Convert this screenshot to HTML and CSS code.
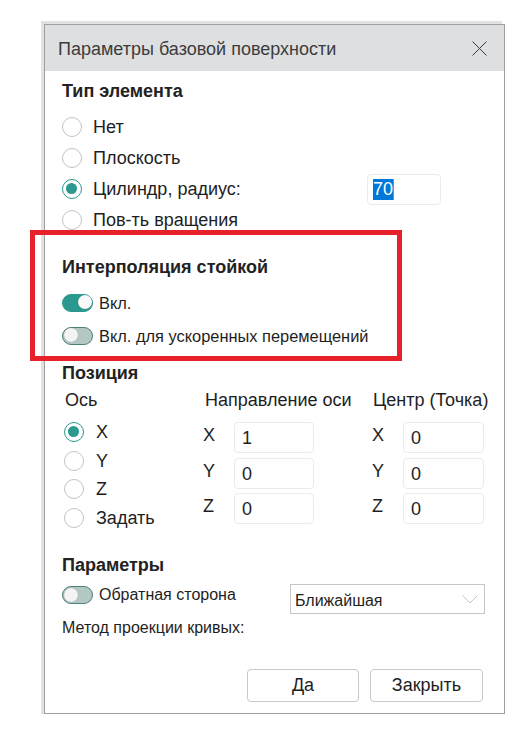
FILE: index.html
```html
<!DOCTYPE html>
<html lang="ru">
<head>
<meta charset="utf-8">
<title>Параметры базовой поверхности</title>
<link rel="stylesheet" href="styles.css">
</head>
<body>
<div class="dialog">
  <div class="titlebar">
    <span class="title">Параметры базовой поверхности</span>
    <svg class="close" width="15" height="15" viewBox="0 0 15 15"><path d="M0.5 0.5 L14.5 14.5 M14.5 0.5 L0.5 14.5" stroke="#3a3a3a" stroke-width="1" fill="none"/></svg>
  </div>
  <div class="content">
    <div class="section type">
      <div class="h">Тип элемента</div>
      <div class="radio-row"><span class="radio"></span><span class="lbl">Нет</span></div>
      <div class="radio-row"><span class="radio"></span><span class="lbl">Плоскость</span></div>
      <div class="radio-row"><span class="radio on"></span><span class="lbl cyl">Цилиндр, радиус:</span><span class="input radius"><span class="sel">70</span><span class="caret"></span></span></div>
      <div class="radio-row"><span class="radio"></span><span class="lbl">Пов-ть вращения</span></div>
    </div>
    <div class="section interp">
      <div class="redbox"></div>
      <div class="h">Интерполяция стойкой</div>
      <div class="toggle-row"><span class="toggle on"></span><span class="lbl small">Вкл.</span></div>
      <div class="toggle-row"><span class="toggle"></span><span class="lbl small">Вкл. для ускоренных перемещений</span></div>
    </div>
    <div class="section pos">
      <div class="h">Позиция</div>
      <div class="pos-grid">
        <div class="col axis">
          <div class="colhead">Ось</div>
          <div class="axis-rows">
            <div class="axis-row"><span class="radio on"></span><span class="lbl">X</span></div>
            <div class="axis-row"><span class="radio"></span><span class="lbl">Y</span></div>
            <div class="axis-row"><span class="radio"></span><span class="lbl">Z</span></div>
            <div class="axis-row"><span class="radio"></span><span class="lbl">Задать</span></div>
          </div>
        </div>
        <div class="col dir">
          <div class="colhead">Направление оси</div>
          <div class="fields">
            <div class="field-row"><span class="flbl">X</span><span class="input num">1</span></div>
            <div class="field-row"><span class="flbl">Y</span><span class="input num">0</span></div>
            <div class="field-row"><span class="flbl">Z</span><span class="input num">0</span></div>
          </div>
        </div>
        <div class="col center">
          <div class="colhead">Центр (Точка)</div>
          <div class="fields">
            <div class="field-row"><span class="flbl">X</span><span class="input num">0</span></div>
            <div class="field-row"><span class="flbl">Y</span><span class="input num">0</span></div>
            <div class="field-row"><span class="flbl">Z</span><span class="input num">0</span></div>
          </div>
        </div>
      </div>
    </div>
    <div class="section params">
      <div class="h">Параметры</div>
      <div class="param-row">
        <span class="toggle"></span><span class="lbl small back">Обратная сторона</span>
        <span class="select"><span class="seltext">Ближайшая</span>
          <svg class="chev" width="16" height="9" viewBox="0 0 16 9"><path d="M0.5 0.5 L8 8 L15.5 0.5" stroke="#c4c4c4" stroke-width="1" fill="none"/></svg>
        </span>
      </div>
      <div class="method">Метод проекции кривых:</div>
    </div>
    <div class="buttons">
      <button class="btn ok">Да</button>
      <button class="btn close-btn">Закрыть</button>
    </div>
  </div>
</div>
</body>
</html>
```
FILE: styles.css
```css
* { box-sizing: border-box; }
html, body { margin: 0; padding: 0; background: #ffffff; }
body {
  font-family: "Liberation Sans", Arial, sans-serif;
  font-size: 18px;
  color: #1e1e1e;
  padding: 24px 0 0 44px;
  height: 729px;
  overflow: hidden;
}
.dialog {
  width: 461px;
  height: 690px;
  border: 1px solid #9e9e9e;
  background: #ffffff;
  box-shadow: -3px -3px 0 0 #e2e2e2, -3px 0 0 0 #e2e2e2;
  display: flex;
  flex-direction: column;
}
.titlebar {
  height: 46px;
  background: #dedfe1;
  display: flex;
  align-items: center;
  padding: 0 17px 0 13px;
  justify-content: space-between;
  flex: none;
}
.title {
  font-size: 18px;
  color: #3c3c3c;
  line-height: 22px;
  margin-top: 2px;
}
.close { display: block; margin-top: 1px; }
.content {
  padding: 10px 0 0 17px;
  display: flex;
  flex-direction: column;
}
.h {
  font-weight: bold;
  font-size: 18px;
  height: 20px;
  line-height: 20px;
  color: #222;
}
.radio {
  width: 20px;
  height: 20px;
  border-radius: 50%;
  border: 1.5px solid #c3c3c3;
  background: #fff;
  display: inline-block;
  flex: none;
  position: relative;
}
.radio.on {
  border-color: #2c998e;
}
.radio.on::after {
  content: "";
  position: absolute;
  left: 3px; top: 3px;
  width: 11px; height: 11px;
  border-radius: 50%;
  background: #2c998e;
}
.type .h { margin-bottom: 10px; }
.radio-row {
  height: 31px;
  display: flex;
  align-items: center;
}
.radio-row .radio { margin-right: 11px; }
.lbl { white-space: nowrap; line-height: 22px; }
.small { font-size: 16.4px; }
.cyl { width: 274px; }
.input {
  display: inline-flex;
  align-items: center;
  border: 1px solid #ebebeb;
  border-radius: 4px;
  background: #fff;
  height: 31px;
}
.radius {
  width: 74px;
  padding-left: 5px;
  margin-top: 1px;
}
.sel {
  background: #0078d7;
  color: #fff;
  line-height: 21px;
}
.caret {
  width: 1px;
  height: 21px;
  background: #e0761e;
}
.interp {
  position: relative;
  padding-top: 22px;
}
.redbox {
  position: absolute;
  left: -32px;
  top: -5px;
  width: 372px;
  height: 131px;
  border: 5px solid #e62129;
}
.interp .h { margin-bottom: 9px; }
.toggle-row {
  height: 33px;
  display: flex;
  align-items: center;
}
.toggle {
  width: 31px;
  height: 18px;
  border-radius: 9px;
  border: 1.5px solid #4e807c;
  background: #b3c7c4;
  position: relative;
  flex: none;
  margin-right: 6px;
}
.toggle::after {
  content: "";
  position: absolute;
  top: 0.5px;
  left: 0.5px;
  width: 14px;
  height: 14px;
  border-radius: 50%;
  background: #f4f4f4;
  box-shadow: 0 0 1px rgba(0,0,0,0.3);
}
.toggle.on {
  background: #2c998e;
  border-color: #2c998e;
}
.toggle.on::after {
  left: auto;
  right: 0.5px;
  background: #fafafa;
}
.pos { padding-top: 11px; }
.pos-grid {
  display: grid;
  grid-template-columns: 141px 169px 112px;
  margin-top: 6px;
  align-items: start;
}
.colhead {
  height: 22px;
  line-height: 22px;
  white-space: nowrap;
}
.axis .colhead { padding-left: 3px; }
.dir .colhead { padding-left: 2px; }
.center .colhead { padding-left: 1px; }
.axis-rows {
  margin-top: 7px;
  padding-left: 2px;
}
.axis-row {
  height: 28.5px;
  display: flex;
  align-items: center;
}
.axis-row .radio { margin-right: 12px; }
.fields { margin-top: 11px; }
.field-row {
  height: 31px;
  margin-bottom: 4.5px;
  display: flex;
  align-items: flex-start;
}
.field-row:last-child { margin-bottom: 0; }
.flbl {
  width: 31px;
  line-height: 24px;
  padding-top: 1px;
}
.input.num {
  width: 80px;
  padding-left: 7px;
  padding-top: 2px;
}
.center .input.num { width: 81px; }
.params { padding-top: 23px; }
.params .h { margin-bottom: 9px; }
.param-row {
  height: 30px;
  display: flex;
  align-items: flex-start;
}
.param-row .toggle { margin-top: 2px; margin-left: 0; }
.back { width: 191px; line-height: 20px; margin-top: 1px; font-size: 16px; }
.select {
  width: 195px;
  height: 30px;
  border: 1px solid #c6c6c6;
  display: flex;
  align-items: center;
  justify-content: space-between;
  padding: 3px 6px 0 4px;
  font-size: 16px;
}
.chev { margin-top: -2px; }
.method {
  height: 20px;
  line-height: 20px;
  margin-top: 4px;
  font-size: 16px;
}
.buttons {
  display: flex;
  justify-content: flex-end;
  gap: 11px;
  padding-right: 21px;
  margin-top: 31px;
}
.btn {
  font-family: "Liberation Sans", Arial, sans-serif;
  font-size: 18px;
  color: #1e1e1e;
  background: #fff;
  border: 1px solid #c8c8c8;
  border-radius: 4px;
  height: 33px;
  width: 113px;
  padding: 0;
}
.btn.ok { width: 112px; }
```
